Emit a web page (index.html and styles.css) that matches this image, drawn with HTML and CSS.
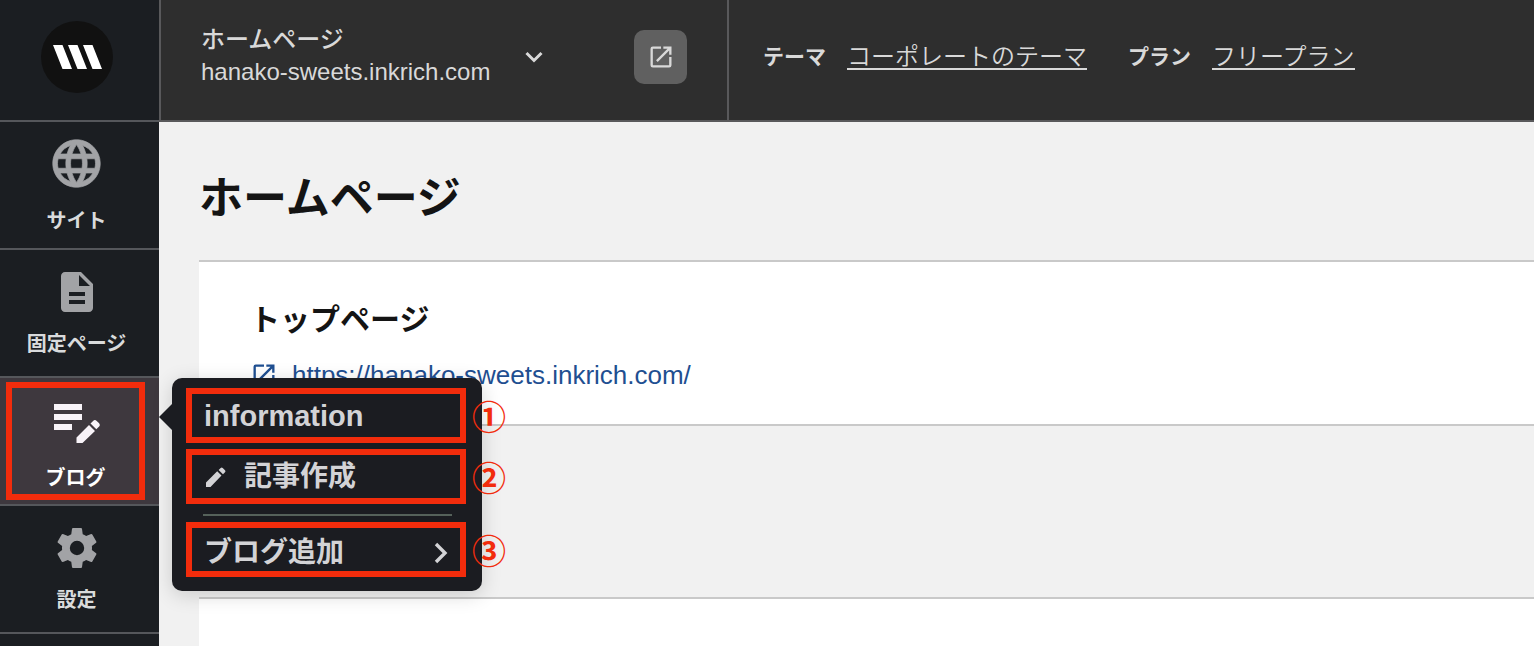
FILE: index.html
```html
<!DOCTYPE html>
<html lang="ja">
<head>
<meta charset="utf-8">
<title>ホームページ</title>
<link rel="stylesheet" href="styles.css">
</head>
<body>
<div class="app">
  <nav class="sidebar">
    <a class="brand" href="#" aria-label="Top">
      <svg width="72" height="72" viewBox="0 0 72 72"><circle cx="36" cy="36" r="36" fill="#111"/><path d="M12 24h9.500l9.500 24h-9.500zM27 24h9.500l9.500 24h-9.500zM42 24h9.500l9.500 24h-9.500z" fill="#fff"/></svg>
    </a>
    <div class="nav-item">
      <a class="nav-link" href="#">
        <svg class="nav-icon" viewBox="0 0 24 24"><path stroke="#a2a3a6" stroke-width=".3" d="M11.990 2C6.470 2 2 6.480 2 12s4.470 10 9.990 10C17.520 22 22 17.520 22 12S17.520 2 11.990 2zm6.930 6h-2.950c-.32-1.250-.78-2.450-1.380-3.560 1.840.63 3.370 1.910 4.330 3.560zM12 4.040c.83 1.200 1.480 2.530 1.910 3.960h-3.820c.43-1.430 1.080-2.760 1.910-3.960zM4.260 14C4.100 13.360 4 12.690 4 12s.1-1.360.26-2h3.380c-.08.66-.14 1.320-.14 2s.06 1.340.14 2H4.260zm.82 2h2.950c.32 1.250.78 2.450 1.380 3.560-1.840-.63-3.370-1.900-4.330-3.560zm2.950-8H5.080c.96-1.660 2.490-2.930 4.330-3.560C8.810 5.550 8.350 6.750 8.030 8zM12 19.960c-.83-1.200-1.480-2.530-1.910-3.960h3.820c-.43 1.430-1.080 2.760-1.910 3.960zM14.340 14H9.660c-.09-.66-.16-1.320-.16-2s.07-1.350.16-2h4.680c.09.65.16 1.320.16 2s-.07 1.340-.16 2zm.25 5.560c.6-1.110 1.060-2.310 1.380-3.560h2.950c-.96 1.650-2.490 2.930-4.330 3.560zM16.360 14c.08-.66.14-1.320.14-2s-.06-1.340-.14-2h3.380c.16.64.26 1.310.26 2s-.1 1.360-.26 2h-3.380z"/></svg>
        <span>サイト</span>
      </a>
    </div>
    <div class="nav-item">
      <a class="nav-link raised" href="#">
        <svg class="nav-icon small" viewBox="0 0 24 24"><path d="M14 2H6c-1.100 0-2 .9-2 2v16c0 1.100.9 2 2 2h12c1.100 0 2-.9 2-2V8l-6-6zm2 16H8v-2h8v2zm0-4H8v-2h8v2zm-3-5V3.500L18.500 9H13z"/></svg>
        <span>固定ページ</span>
      </a>
    </div>
    <div class="nav-item active">
      <a class="nav-link" href="#">
        <svg class="nav-icon" viewBox="0 0 48 48"><path d="M2 6h28v6H2zM2 16h28v6H2zM2 26h18v6H2zM24.500 39.500L37 27l6 6-12.500 12H24.500zM38.500 25.500l2.600-2.600q1.800-1.800 3.600 0l2.200 2.200q1.800 1.800 0 3.600l-2.600 2.600z"/></svg>
        <span>ブログ</span>
      </a>
      <div class="flyout">
        <a class="fly-item latin" href="#"><span>information</span><span class="mark">①</span></a>
        <a class="fly-item" href="#">
          <svg width="24" height="24" viewBox="0 0 24 24"><path d="M2 17.500V22h4.500L17.500 10.500 13.200 6.200zM14.600 4.900l4.400 4.400 2-2q1-1 0-2L18.700 2.900q-1-1-2 0z" fill="currentColor"/></svg>
          <span>記事作成</span><span class="mark">②</span>
        </a>
        <hr class="fly-rule">
        <a class="fly-item add" href="#"><span>ブログ追加</span>
          <svg class="fly-arrow" width="14" height="22" viewBox="0 0 14 22"><path d="M2 2l9 9-9 9" fill="none" stroke="currentColor" stroke-width="3.400"/></svg>
          <span class="mark">③</span></a>
      </div>
    </div>
    <div class="nav-item">
      <a class="nav-link raised" href="#">
        <svg class="nav-icon small" viewBox="0 0 24 24"><path d="M19.430 12.980c.04-.32.07-.64.07-.98s-.03-.66-.07-.98l2.110-1.650c.19-.15.24-.42.12-.64l-2-3.460c-.12-.22-.39-.3-.61-.22l-2.490 1c-.52-.4-1.080-.73-1.690-.98l-.38-2.650C14.460 2.180 14.250 2 14 2h-4c-.25 0-.46.18-.49.42l-.38 2.650c-.61.25-1.170.59-1.690.98l-2.490-1c-.23-.09-.49 0-.61.22l-2 3.460c-.13.22-.07.49.12.64l2.110 1.650c-.04.32-.07.65-.07.98s.03.66.07.98l-2.110 1.650c-.19.15-.24.42-.12.64l2 3.460c.12.22.39.3.61.22l2.490-1c.52.4 1.080.73 1.690.98l.38 2.650c.03.24.24.42.49.42h4c.25 0 .46-.18.49-.42l.38-2.650c.61-.25 1.170-.59 1.690-.98l2.490 1c.23.09.49 0 .61-.22l2-3.460c.12-.22.07-.49-.12-.64l-2.110-1.650zM12 15.600a3.600 3.600 0 1 1 0-7.200 3.600 3.600 0 0 1 0 7.200z"/></svg>
        <span>設定</span>
      </a>
    </div>
  </nav>
  <div class="content">
    <header class="topbar">
      <div class="site">
        <button class="site-switch" type="button">
          <span class="site-text"><b class="site-name">ホームページ</b><span>hanako-sweets.inkrich.com</span></span>
          <svg width="18" height="12" viewBox="0 0 18 12"><path d="M1.500 2L9 9.500 16.500 2" fill="none" stroke="currentColor" stroke-width="3"/></svg>
        </button>
        <button class="open" type="button" aria-label="サイトを開く">
          <svg width="28" height="28" viewBox="0 0 24 24"><path d="M19 19H5V5h7V3H5a2 2 0 0 0-2 2v14a2 2 0 0 0 2 2h14a2 2 0 0 0 2-2v-7h-2v7zM14 3v2h3.590l-9.830 9.830 1.410 1.410L19 6.410V10h2V3h-7z" fill="currentColor"/></svg>
        </button>
      </div>
      <dl class="meta">
        <div class="meta-pair"><dt>テーマ</dt><dd><a href="#">コーポレートのテーマ</a></dd></div>
        <div class="meta-pair"><dt>プラン</dt><dd><a href="#">フリープラン</a></dd></div>
      </dl>
    </header>
    <main class="main">
      <h1>ホームページ</h1>
      <section class="card">
        <h2>トップページ</h2>
        <a class="url" href="#">
          <svg width="28" height="28" viewBox="0 0 24 24"><path d="M19 19H5V5h7V3H5a2 2 0 0 0-2 2v14a2 2 0 0 0 2 2h14a2 2 0 0 0 2-2v-7h-2v7zM14 3v2h3.590l-9.830 9.830 1.410 1.410L19 6.410V10h2V3h-7z" fill="currentColor"/></svg>
          <span>https://hanako-sweets.inkrich.com/</span>
        </a>
      </section>
      <section class="card"></section>
    </main>
  </div>
</div>
</body>
</html>
```
FILE: styles.css
```css
* { box-sizing: border-box; }
body {
  margin: 0;
  background: #f1f1f1;
  color: #141414;
  font-family: "Liberation Sans", "Noto Sans CJK JP", sans-serif;
}
a { color: inherit; text-decoration: none; }
button { border: 0; margin: 0; font: inherit; color: inherit; cursor: pointer; }
svg { display: block; flex: none; }

.app { display: grid; grid-template-columns: 159px 1fr; height: 100vh; overflow: hidden; }

.sidebar { background: #1b1e22; color: #d9dbdc; position: relative; z-index: 1; }
.brand {
  display: flex;
  justify-content: center;
  padding: 21px 6px 27px 0;
  border-bottom: 2px solid #55575b;
}
.nav-item { display: flow-root; position: relative; border-bottom: 2px solid #55575b; }
.nav-link {
  display: flex;
  flex-direction: column;
  align-items: center;
  justify-content: space-between;
  height: 126px;
  padding: 13px 6px 13px 0;
  font-size: 20px;
  font-weight: 700;
  line-height: 30px;
  font-family: "Noto Sans CJK JP", sans-serif;
}
.nav-link.raised { padding-bottom: 18px; }
.nav-icon { width: 57px; height: 57px; fill: #a2a3a6; }
.nav-icon.small { width: 48px; height: 48px; margin-top: 5px; }
.active { background: #3e383e; color: #fff; }
.active .nav-link {
  width: 139px;
  height: 118px;
  margin: 4px 0 4px 6px;
  padding: 10px 0 2px;
  border: 6px solid #f22c0c;
}
.active .nav-icon { width: 48px; height: 48px; fill: #f8f3f8; }

.flyout {
  position: absolute;
  top: 0;
  left: 172px;
  width: 310px;
  padding: 10px 16px 14px 14px;
  border-radius: 10px;
  background: #1b1c21;
  color: #d3d3d6;
  box-shadow: 0 4px 20px rgba(0, 0, 0, .16);
}
.flyout::before {
  content: "";
  position: absolute;
  top: 26px;
  left: -13px;
  border: solid transparent;
  border-width: 13px 13px 13px 0;
  border-right-color: #1b1c21;
}
.fly-item {
  position: relative;
  display: flex;
  align-items: center;
  gap: 16px;
  height: 55px;
  padding: 0 12px;
  border: 6px solid #f22c0c;
  font-size: 28px;
  font-weight: 700;
  line-height: 36px;
}
.fly-item.latin { font-size: 29px; }
.fly-item.add { padding-top: 6px; }
.fly-item + .fly-item { margin-top: 6px; }
.fly-arrow { margin-left: auto; }
.fly-rule { height: 2px; margin: 10px 14px 6px 17px; border: 0; background: #55615a; }
.fly-item .mark {
  position: absolute;
  top: 1px;
  left: 280px;
  color: #f22c0c;
  font: 700 34px/42px "Noto Sans CJK JP", sans-serif;
}

.content { min-width: 0; }
.topbar {
  display: flex;
  height: 122px;
  background: #2e2e2e;
  color: #d9d9d9;
  border-left: 2px solid #59595b;
  border-bottom: 2px solid #59595b;
}
.site {
  display: flex;
  align-items: center;
  justify-content: space-between;
  width: 568px;
  padding: 0 40px 6px;
  border-right: 2px solid #59595b;
}
.site-switch {
  display: flex;
  align-items: center;
  gap: 35px;
  padding: 0;
  background: none;
  text-align: left;
  font-size: 24px;
  line-height: 34px;
}
.site-text { display: flex; flex-direction: column; padding-bottom: 4px; }
.site-name { font-weight: 500; font-family: "Noto Sans CJK JP", sans-serif; }
.open {
  display: grid;
  place-items: center;
  width: 53px;
  height: 54px;
  padding: 0;
  border-radius: 10px;
  background: #606060;
}
.meta { display: flex; align-items: center; gap: 41px; margin: 0; padding: 0 34px 10px; }
.meta-pair { display: flex; align-items: center; gap: 21px; }
.meta dt { font-size: 21px; font-weight: 700; }
.meta dd { margin: 0; font-size: 24px; }
.meta a {
  display: block;
  line-height: 27px;
  border-bottom: 2px solid #d9d9d9;
  font-weight: 350;
  font-family: "Noto Sans CJK JP", sans-serif;
}

.main { padding: 45px 0 0 40px; }
h1 { margin: 0 0 29px; font-size: 44px; line-height: 64px; font-weight: 700; }
.card {
  min-height: 166px;
  margin-bottom: 171px;
  padding: 37px 51px 29px;
  border: solid #c9c9c9;
  border-width: 2px 0;
  background: #fff;
}
h2 { margin: 0 0 14px; font-size: 30px; line-height: 42px; font-weight: 700; }
.url { display: flex; align-items: center; gap: 14px; font-size: 26px; line-height: 40px; color: #1f4f91; }
```
